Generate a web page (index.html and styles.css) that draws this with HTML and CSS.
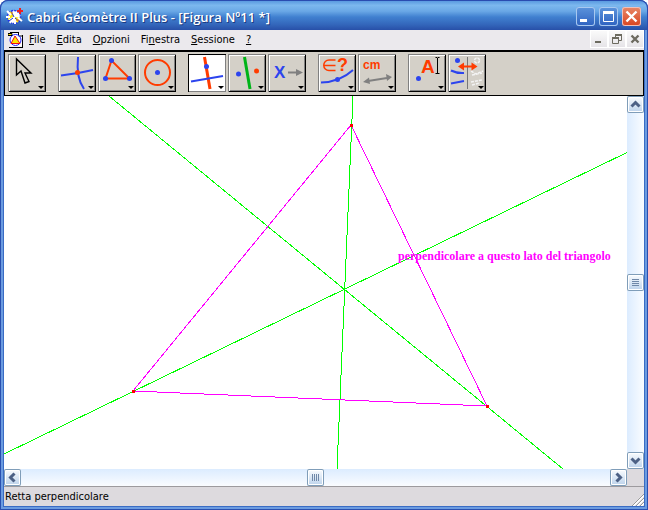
FILE: index.html
```
<!DOCTYPE html>
<html lang="it">
<head>
    <meta charset="UTF-8">
    <title>Cabri Géomètre II Plus</title>
    <link rel="stylesheet" href="styles.css">
</head>
<body>
    <div class="window">
        <header class="titlebar">
            <svg class="app-icon" width="17" height="17" viewBox="0 0 17 17">
                <circle cx="8" cy="9" r="6.500" fill="#fff" stroke="#2233ee" stroke-width="1.500" stroke-dasharray="2 1"/>
                <path d="M4 3l4 5-6 4zM9 9l6 1-4 5z" fill="#ffe600"/>
                <path d="M1 3l4 4M0 9h4M4 15l2-4M10 8l4-3M9 12v4M12 10l4 3" stroke="#fff" stroke-width="2"/>
                <path d="M5 3l3 6M3 13l4-3M9 10l5 4" stroke="#2233cc"/>
                <path d="M5 5h2M10 12h3" stroke="#ff8800"/>
                <path d="M11 3h6M14 0v6" stroke="#ee2020" stroke-width="2"/>
            </svg>
            <h1>Cabri Géomètre II Plus - [Figura Nº11 *]</h1>
            <div class="win-buttons">
                <button class="win-btn" aria-label="Riduci a icona"><svg width="19" height="19" viewBox="0 0 19 19"><path d="M4 13.500h7" stroke="#fff" stroke-width="3"/></svg></button>
                <button class="win-btn" aria-label="Ingrandisci"><svg width="19" height="19" viewBox="0 0 19 19"><path d="M4.500 5v9.500h10V5" fill="none" stroke="#fff"/><path d="M4 5.500h11" stroke="#fff" stroke-width="3"/></svg></button>
                <button class="win-btn close" aria-label="Chiudi"><svg width="19" height="19" viewBox="0 0 19 19"><path d="M4.500 4.500l10 10M14.500 4.500l-10 10" stroke="#fff" stroke-width="2.400"/></svg></button>
            </div>
        </header>

        <nav class="menubar">
            <svg class="doc-icon" width="15" height="17" viewBox="0 0 15 17">
                <path d="M2 1.500h9l3 3v11H2z" fill="#fff"/>
                <path d="M2 1.500h9M14.500 4v12M1 16.500h14" stroke="#000" fill="none"/>
                <path d="M10.500 1v4h4" fill="none" stroke="#000"/>
                <circle cx="7.500" cy="9" r="5.500" fill="none" stroke="#2222ff"/>
                <path d="M7 5L3 12.500h9z" fill="#ffe600" stroke="#ee1111"/>
                <path d="M0 2.500h4v2H0z" fill="#ffe600" stroke="#000"/>
            </svg>
            <button><u>F</u>ile</button>
            <button><u>E</u>dita</button>
            <button><u>O</u>pzioni</button>
            <button>Fi<u>n</u>estra</button>
            <button><u>S</u>essione</button>
            <button><u>?</u></button>
            <div class="doc-buttons">
                <button aria-label="Riduci figura"><svg width="16" height="16" viewBox="0 0 16 16"><path d="M4 11h6" stroke="#6d6b60" stroke-width="2"/></svg></button>
                <button aria-label="Ripristina figura"><svg width="16" height="16" viewBox="0 0 16 16"><path d="M6 4h7M3 7h7" stroke="#6d6b60" stroke-width="2"/><path d="M6.500 4v2M12.500 4v5.500H10M3.500 7v5.500h6V7" fill="none" stroke="#6d6b60"/></svg></button>
                <button aria-label="Chiudi figura"><svg width="16" height="16" viewBox="0 0 16 16"><path d="M4.500 4.500l7 7M11.500 4.500l-7 7" stroke="#6d6b60" stroke-width="2.400"/></svg></button>
            </div>
        </nav>

        <div class="toolbar">
            <div class="tool-group">
                <button class="tool" aria-label="Puntatore"><svg width="38" height="38" viewBox="0 0 38 38">
                    <path d="M8.500 5v16l4.500-4 4 12 4-1.500L17 19h6z" fill="none" stroke="#000" stroke-width="1.400"/>
                    <path class="more" d="M30 32h6l-3 3z"/>
                </svg></button>
            </div>
            <div class="tool-group">
                <button class="tool" aria-label="Punto"><svg width="38" height="38" viewBox="0 0 38 38">
                    <path class="blue" d="M3 21.500Q20 19.500 35 16M20 3Q18 24 26 35"/>
                    <circle class="red-dot" cx="19.500" cy="18.500" r="2.500"/>
                    <path class="more" d="M30 32h6l-3 3z"/>
                </svg></button>
                <button class="tool" aria-label="Triangolo"><svg width="38" height="38" viewBox="0 0 38 38">
                    <path class="red" d="M13.500 6.500L7.500 24.500h24z"/>
                    <circle class="blue-dot" cx="13.500" cy="6.500" r="2.500"/><circle class="blue-dot" cx="7.500" cy="24.500" r="2.500"/><circle class="blue-dot" cx="31.500" cy="24.500" r="2.500"/>
                    <path class="more" d="M30 32h6l-3 3z"/>
                </svg></button>
                <button class="tool" aria-label="Circonferenza"><svg width="38" height="38" viewBox="0 0 38 38">
                    <circle class="red" cx="19.500" cy="18.500" r="12.500"/>
                    <circle class="blue-dot" cx="19.500" cy="18.500" r="2.500"/>
                    <path class="more" d="M30 32h6l-3 3z"/>
                </svg></button>
            </div>
            <div class="tool-group">
                <button class="tool active" aria-label="Retta perpendicolare" aria-pressed="true"><svg width="38" height="38" viewBox="0 0 38 38">
                    <path class="red thick" d="M16.500 3L22 35"/>
                    <path class="blue" d="M3 27.500L35 22"/>
                    <circle class="blue-dot" cx="18.500" cy="12.500" r="2.500"/>
                    <path class="more" d="M30 32h6l-3 3z"/>
                </svg></button>
                <button class="tool" aria-label="Simmetria"><svg width="38" height="38" viewBox="0 0 38 38">
                    <path class="green thick" d="M16.500 3L22 35"/>
                    <circle class="blue-dot" cx="10.500" cy="20" r="2.500"/><circle class="red-dot" cx="28.500" cy="17" r="2.500"/>
                    <path class="more" d="M30 32h6l-3 3z"/>
                </svg></button>
                <button class="tool" aria-label="Macro"><svg width="38" height="38" viewBox="0 0 38 38">
                    <text class="x-letter" x="6" y="24">X</text>
                    <path class="gray" d="M20 18.500h9"/><path class="gray-head" d="M28 15l7 3.500-7 3.500z"/>
                    <path class="more" d="M30 32h6l-3 3z"/>
                </svg></button>
            </div>
            <div class="tool-group">
                <button class="tool" aria-label="Appartenenza"><svg width="38" height="38" viewBox="0 0 38 38">
                    <path d="M17.500 6H11a5 5 0 0 0 0 10.500h6.500M5.500 11.500h12" fill="none" stroke="#ff3c00" stroke-width="1.500"/>
                    <text class="question" x="19" y="17">?</text>
                    <path class="blue" d="M3 28.500Q22 28 35 16"/>
                    <circle class="blue-dot" cx="19.500" cy="25.500" r="2.500"/>
                    <path class="more" d="M30 32h6l-3 3z"/>
                </svg></button>
                <button class="tool" aria-label="Misura"><svg width="38" height="38" viewBox="0 0 38 38">
                    <text class="unit" x="5" y="15">cm</text>
                    <path class="gray" d="M10 27l19-3"/><path class="gray-head" d="M5 28l6-4.500 1 6.500zM34 23l-6-3 1 7z"/>
                    <path class="more" d="M30 32h6l-3 3z"/>
                </svg></button>
            </div>
            <div class="tool-group">
                <button class="tool" aria-label="Testo"><svg width="38" height="38" viewBox="0 0 38 38">
                    <text class="a-letter" x="13" y="19">A</text>
                    <path d="M27.500 3.500h1.500l.5 1 .5-1h1.500M29.500 4v15M27.500 19.500h4" fill="none" stroke="#000"/>
                    <circle class="blue-dot" cx="10.500" cy="24.500" r="2.500"/>
                    <path class="more" d="M30 32h6l-3 3z"/>
                </svg></button>
                <button class="tool" aria-label="Mostra/Nascondi"><svg width="38" height="38" viewBox="0 0 38 38">
                    <path d="M19.500 3v32" stroke="#777"/>
                    <circle class="blue-dot" cx="9.500" cy="6.500" r="2.500"/>
                    <path class="blue" d="M3 16.500q6 3 13 2.500M3 29.500l13-2.500"/>
                    <g fill="none" stroke="#f4f4f4" stroke-width="1.500" stroke-dasharray="3 1"><circle cx="29" cy="6.500" r="2.500"/><path d="M23 17l5 3 7-3M24 21l10-2M23 28l11-2M24 31l8-2"/></g>
                    <path d="M14 12.500h12" stroke="#ff3c00" stroke-width="2"/><path d="M10 12.500l6-4v8zM29.500 12.500l-6-4v8z" fill="#ff3c00"/>
                    <path class="more" d="M30 32h6l-3 3z"/>
                </svg></button>
            </div>
        </div>

        <main class="workspace">
            <svg class="figure" viewBox="4 96 623 373" preserveAspectRatio="xMidYMid slice">
                <g class="altitudes">
                    <path d="M353 96L337 469"/>
                    <path d="M4 454L628 152"/>
                    <path d="M109 96L563 469"/>
                </g>
                <path class="triangle" d="M351 125L133 391L487 406z"/>
                <g class="vertices">
                    <rect x="350" y="124" width="3" height="3"/>
                    <rect x="132" y="390" width="3" height="3"/>
                    <rect x="486" y="405" width="3" height="3"/>
                </g>
                <text class="label" x="398" y="260">perpendicolare a questo lato del triangolo</text>
            </svg>
            <div class="scroll vertical">
                <button class="scroll-btn" aria-label="Su"><svg width="15" height="15" viewBox="0 0 15 15"><path d="M3.500 9.500l4-4 4 4"/></svg></button>
                <button class="scroll-btn" aria-label="Cursore verticale"><svg width="15" height="15" viewBox="0 0 15 15"><path class="grip" d="M4 4.500h7M4 6.500h7M4 8.500h7M4 10.500h7"/></svg></button>
                <button class="scroll-btn" aria-label="Giù"><svg width="15" height="15" viewBox="0 0 15 15"><path d="M3.500 5.500l4 4 4-4"/></svg></button>
            </div>
            <div class="scroll horizontal">
                <button class="scroll-btn" aria-label="Sinistra"><svg width="15" height="15" viewBox="0 0 15 15"><path d="M9.500 3.500l-4 4 4 4"/></svg></button>
                <button class="scroll-btn" aria-label="Cursore orizzontale"><svg width="15" height="15" viewBox="0 0 15 15"><path class="grip" d="M4.500 4v7M6.500 4v7M8.500 4v7M10.500 4v7"/></svg></button>
                <button class="scroll-btn" aria-label="Destra"><svg width="15" height="15" viewBox="0 0 15 15"><path d="M5.500 3.500l4 4-4 4"/></svg></button>
            </div>
        </main>

        <footer class="statusbar">
            <span>Retta perpendicolare</span>
            <svg width="12" height="12" viewBox="0 0 12 12"><path d="M1 12L12 1M5 12l7-7M9 12l3-3" stroke="#fff" stroke-width="2"/><path d="M0 12L12 0M4 12l8-8M8 12l4-4" stroke="#999"/></svg>
        </footer>
    </div>
</body>
</html>
```

FILE: styles.css
```
* {
    box-sizing: border-box;
}
body {
    margin: 0;
    background: #fff;
    font-family: "DejaVu Sans Condensed", "DejaVu Sans", sans-serif;
    font-size: 11px;
    color: #000;
}
button {
    margin: 0;
    padding: 0;
    border: none;
    background: none;
    font: inherit;
    color: inherit;
}
svg {
    display: block;
}
.window {
    display: flex;
    flex-direction: column;
    height: 100vh;
    padding: 0 4px 4px;
    border-radius: 8px 8px 0 0;
    background: #3a6cc4;
    box-shadow: inset 0 0 0 1px #2a50b0, inset 0 0 0 3px #6b9be0;
    overflow: hidden;
}

/* title bar */
.titlebar {
    display: flex;
    align-items: center;
    height: 30px;
    margin: 0 -4px;
    padding: 2px 6px 0 5px;
    border-radius: 8px 8px 0 0;
    border: 1px solid #2a4cb0;
    border-bottom: none;
    background: linear-gradient(#5a9ae0, #7cb8ee 15%, #6aa8e6 35%, #4080d0 55%, #3468bc 80%, #2850a8);
}
.titlebar h1 {
    flex: 1;
    margin: 0 0 0 4px;
    font: 600 13px "Open Sans", sans-serif;
    color: #fff;
    text-shadow: 1px 1px #1c3a80;
}
.win-buttons {
    display: flex;
    gap: 4px;
}
.win-btn {
    width: 19px;
    height: 19px;
    border-radius: 3px;
    background: linear-gradient(#5c94dc, #2e62c0);
    box-shadow: inset 0 0 0 1px #a8c8f0;
}
.win-btn.close {
    background: linear-gradient(#e88868, #d84420);
    box-shadow: inset 0 0 0 1px #f0c0b8;
}

/* menu bar */
.menubar {
    display: flex;
    align-items: center;
    gap: 11px;
    height: 20px;
    padding: 0 1px 2px 4px;
    background: #ebe9ed;
}
.doc-icon {
    margin-right: -5px;
}
.doc-buttons {
    display: flex;
    gap: 2px;
    margin-left: auto;
}
.doc-buttons button {
    width: 16px;
    height: 16px;
    background: linear-gradient(#fafafa, #e6e4e8);
    box-shadow: 0 0 0 1px #fff;
}

/* tools */
.toolbar {
    display: flex;
    gap: 12px;
    height: 46px;
    padding: 2px 3px;
    border: solid #000;
    border-width: 2px 1px 1px;
    background: #d4d0c8;
}
.tool-group {
    display: flex;
    gap: 2px;
}
.tool {
    width: 38px;
    height: 38px;
    background: #d4d0c8;
    box-shadow: inset 1px 1px #808080, inset -1px -1px #000, inset 2px 2px #fff, inset -2px -2px #808080;
}
.tool.active {
    background: #fff;
    box-shadow: inset 1px 1px #000, inset -1px -1px #808080;
}
.blue,
.red,
.green,
.gray {
    fill: none;
    stroke-width: 2;
}
.blue {
    stroke: #2c44ee;
}
.red {
    stroke: #ff3c00;
}
.green {
    stroke: #00b418;
}
.thick {
    stroke-width: 3;
}
.gray {
    stroke: #808080;
}
.gray-head {
    fill: #808080;
}
.blue-dot {
    fill: #2c44ee;
}
.red-dot {
    fill: #ff3c00;
}
.more {
    fill: #000;
}
.tool text {
    font-family: "Liberation Sans", sans-serif;
    font-weight: bold;
    fill: #ff3c00;
}
.tool .x-letter {
    font-size: 17px;
    fill: #2c44ee;
}
.tool .question {
    font-size: 18px;
}
.tool .unit {
    font-size: 12px;
}
.tool .a-letter {
    font-size: 19px;
}

/* drawing area */
.workspace {
    flex: 1;
    display: grid;
    grid-template: minmax(0, 1fr) 17px / minmax(0, 1fr) 17px;
    min-height: 0;
    background: #dddade;
}
.figure {
    width: 100%;
    height: 100%;
    background: #fff;
    shape-rendering: crispEdges;
}
.altitudes {
    stroke: #00ff00;
}
.triangle {
    fill: none;
    stroke: #ff00ff;
}
.vertices {
    fill: #ff0000;
}
.label {
    font: bold 12px "Liberation Serif", serif;
    fill: #ff00ff;
}
.scroll {
    display: flex;
    justify-content: space-between;
}
.vertical {
    flex-direction: column;
    background: linear-gradient(90deg, #dcecff, #fafcff);
}
.horizontal {
    background: linear-gradient(#dcecff, #fafcff);
}
.scroll-btn {
    width: 17px;
    height: 17px;
    padding: 1px;
    border-radius: 2px;
    background: linear-gradient(#fdfeff, #b9d0ea);
    box-shadow: inset 0 0 0 1px #7f9db9, inset 0 0 0 2px #fff;
}
.scroll-btn path {
    fill: none;
    stroke: #4d6185;
    stroke-width: 3;
}
.scroll-btn .grip {
    stroke: #7088a8;
    stroke-width: 1;
}

/* status bar */
.statusbar {
    display: flex;
    align-items: center;
    justify-content: space-between;
    height: 20px;
    padding-left: 1px;
    border-top: 1px solid #9d9a9e;
    background: #dddade;
}
.statusbar svg {
    align-self: flex-end;
}
```
